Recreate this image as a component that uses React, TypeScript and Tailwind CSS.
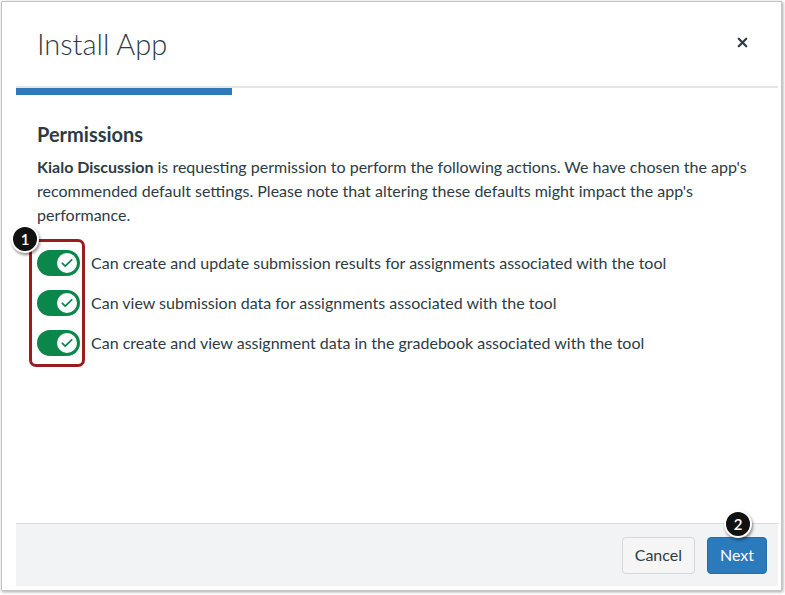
import React from 'react';
import { X } from 'lucide-react';

const permissions = [
  'Can create and update submission results for assignments associated with the tool',
  'Can view submission data for assignments associated with the tool',
  'Can create and view assignment data in the gradebook associated with the tool',
];

const Toggle = () => (
  <div className="w-[43px] h-[26px] rounded-full bg-[#0b874b] flex items-center justify-end pr-[1px]">
    <div className="w-[24px] h-[24px] rounded-full bg-white flex items-center justify-center border-2 border-[#0b874b]">
      <svg width="14" height="14" viewBox="0 0 24 24" fill="none" stroke="#0b874b" strokeWidth={3} strokeLinecap="round" strokeLinejoin="round">
        <path d="M4 12.5l5 5L20 6.5" />
      </svg>
    </div>
  </div>
);

const Badge = ({ n }: { n: number }) => (
  <div className="w-[28px] h-[28px] rounded-full bg-[#111] border-2 border-white shadow-[1px_2px_3px_rgba(0,0,0,0.45)] flex items-center justify-center text-white text-[15px] font-semibold">
    {n}
  </div>
);

const App = () => {
  return (
    <div className="w-[785px] h-[595px] bg-white font-['Lato','Liberation_Sans',sans-serif] text-[#2d3b45]">
      <div className="relative ml-px mt-px w-[781px] h-[590px] border border-[#c4c4c4] shadow-[1px_1px_3px_rgba(0,0,0,0.35)] bg-white flex flex-col">
        <div className="h-[84px] flex items-center justify-between pl-[35px] pr-[31px]">
          <h1 className="text-[29px] font-light leading-none -mt-[2px]">Install App</h1>
          <X size={15} strokeWidth={3.5} className="text-[#2d3b45] -mt-[4px]" />
        </div>
        <div className="ml-[14px] mr-[3px] border-t-2 border-[#e4e6e8]">
          <div className="w-[216px] h-[7px] bg-[#2b7abc]" />
        </div>

        <div className="flex-1 pl-[35px] pr-[20px] pt-[26px]">
          <h2 className="text-[20px] font-bold leading-[26px]">Permissions</h2>
          <p className="mt-[8px] text-[16px] leading-[24px]">
            <b>Kialo Discussion</b> is requesting permission to perform the following actions. We have chosen the app's recommended default settings. Please note that altering these defaults might impact the app's performance.
          </p>

          <div className="relative mt-[23px] flex flex-col gap-[14px]">
            {permissions.map((p) => (
              <div key={p} className="flex items-center gap-[11px] h-[26px]">
                <Toggle />
                <span className="text-[16px]">{p}</span>
              </div>
            ))}
            <div className="absolute -left-[8px] -top-[11px] w-[56px] h-[128px] border-[3px] border-[#9b1c20] rounded-[7px]" />
            <div className="absolute -left-[26px] -top-[25px]">
              <Badge n={1} />
            </div>
          </div>
        </div>

        <div className="relative ml-[14px] mr-[3px] mb-[4px] h-[63px] bg-[#f2f3f4] border-t border-[#d7dadc] flex items-center justify-end gap-[12px] pr-[11px]">
          <button className="h-[37px] px-[12px] rounded-[4px] border border-[#d4d8db] bg-[#f5f5f5] text-[16px] text-[#2d3b45]">
            Cancel
          </button>
          <button className="h-[37px] px-[12px] rounded-[4px] border border-[#1f6fae] bg-[#2b7abc] text-[16px] text-white">
            Next
          </button>
          <div className="absolute right-[26px] -top-[14px]">
            <Badge n={2} />
          </div>
        </div>
      </div>
    </div>
  );
};

export default App;
